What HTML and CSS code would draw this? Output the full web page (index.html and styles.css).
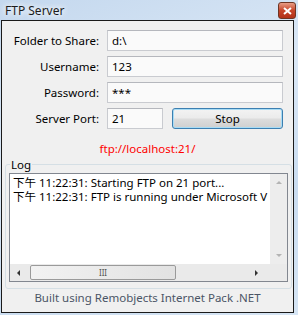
FILE: index.html
```html
<!DOCTYPE html>
<html>
  <head>
    <title>FTP Server</title>
    <link rel="stylesheet" href="styles.css">
  </head>
  <body>
    <div class="window">
      <div class="titlebar">
        <span class="title">FTP Server</span>
        <span class="close-button">
          <svg width="9" height="8" viewBox="0 0 9 8">
            <path d="M1 1 L8 7 M8 1 L1 7" stroke="#fff" stroke-width="2" />
          </svg>
        </span>
      </div>
      <div class="client">
        <div class="form">
          <label>Folder to Share:</label>
          <div class="textbox">d:\</div>
          <label>Username:</label>
          <div class="textbox">123</div>
          <label>Password:</label>
          <div class="textbox">***</div>
          <label>Server Port:</label>
          <div class="port-row">
            <div class="textbox port">21</div>
            <button class="stop-button">Stop</button>
          </div>
        </div>

        <div class="url">ftp://localhost:21/</div>

        <fieldset class="log-group">
          <legend>Log</legend>
          <div class="listbox">
            <div class="list-inner">
              <div class="lines">
                <div>下午 11:22:31: Starting FTP on 21 port...</div>
                <div>下午 11:22:31: FTP is running under Microsoft V</div>
              </div>
              <div class="vscroll">
                <span class="arrow up"></span>
                <span class="arrow down"></span>
              </div>
            </div>
            <div class="hscroll">
              <span class="arrow left"></span>
              <span class="thumb"><span class="grip">III</span></span>
              <span class="arrow right"></span>
              <span class="corner"></span>
            </div>
          </div>
        </fieldset>

        <div class="footer">Built using Remobjects Internet Pack .NET</div>
      </div>
    </div>
  </body>
</html>
```

FILE: styles.css
```css
body {
  margin: 0;
  width: 298px;
  height: 315px;
  overflow: hidden;
  background: linear-gradient(160deg, #c4d8ee 0%, #dbe8f6 40%, #c9dcf0 70%, #d6e5f4 100%);
  font-family: "Noto Sans", "Noto Sans CJK TC", sans-serif;
  font-size: 11.5px;
  color: #000;
}
.window {
  height: 315px;
  display: flex;
  flex-direction: column;
}
.titlebar {
  height: 20px;
  display: flex;
  align-items: center;
  justify-content: space-between;
  padding: 0 2px 0 5px;
}
.title {
  font-size: 12px;
  color: #1c1c1c;
  text-shadow: 0 0 6px #fff, 0 0 6px #fff;
}
.close-button {
  width: 16px;
  height: 15px;
  margin-top: 1px;
  border: 1px solid #6e3524;
  border-radius: 3px;
  background: linear-gradient(#e89d86, #c7452a 50%, #b23219);
  display: flex;
  align-items: center;
  justify-content: center;
}
.client {
  flex: 1;
  margin: 0 4px 2px 1px;
  border: 1px solid #1a1a1a;
  background: #f0f0f0;
  display: flex;
  flex-direction: column;
}
.form {
  display: grid;
  grid-template-columns: 97px 1fr;
  column-gap: 8px;
  row-gap: 5px;
  padding: 9px 10px 0 0;
  align-items: center;
}
.form label {
  text-align: right;
  color: #000;
}
.textbox {
  height: 21px;
  box-sizing: border-box;
  border: 1px solid #c9cbd0;
  border-top-color: #b5b7bd;
  background: #fafafa;
  padding: 2px 4px;
  line-height: 15px;
}
.port-row {
  display: flex;
  gap: 9px;
  align-items: center;
}
.textbox.port {
  width: 56px;
}
.stop-button {
  flex: 1;
  height: 21px;
  border: 1px solid #3c7fb1;
  border-radius: 3px;
  background: linear-gradient(#f3f3f3 0%, #ebebeb 48%, #dddddd 52%, #cfcfcf 100%);
  box-shadow: inset 0 0 0 1px #a8dcf5;
  font-family: "Noto Sans", sans-serif;
  font-size: 11.5px;
  color: #000;
  padding: 0;
}
.url {
  text-align: center;
  color: #ff0000;
  margin-top: 12px;
  height: 16px;
}
.log-group {
  margin: 0 7px 0 3px;
  padding: 0 3px 6px 3px;
  border: 1px solid #d5dfe5;
  border-radius: 3px;
}
.log-group legend {
  padding: 0 1px;
  margin-left: 1px;
}
.listbox {
  border: 1px solid #828790;
  background: #fff;
  height: 107px;
  display: flex;
  flex-direction: column;
  margin-top: 1px;
}
.list-inner {
  flex: 1;
  display: flex;
}
.lines {
  flex: 1;
  padding: 2px 3px;
  line-height: 14px;
  white-space: nowrap;
  overflow: hidden;
}
.vscroll {
  width: 17px;
  background: #ededed;
  display: flex;
  flex-direction: column;
  justify-content: space-between;
  align-items: center;
  padding: 7px 0;
}
.hscroll {
  height: 17px;
  background: #eaeaea;
  display: flex;
  align-items: center;
}
.arrow {
  width: 0;
  height: 0;
}
.arrow.up {
  border-left: 3px solid transparent;
  border-right: 3px solid transparent;
  border-bottom: 3px solid #b4b4b4;
}
.arrow.down {
  border-left: 3px solid transparent;
  border-right: 3px solid transparent;
  border-top: 3px solid #b4b4b4;
}
.arrow.left {
  margin: 0 10px 0 7px;
  border-top: 3px solid transparent;
  border-bottom: 3px solid transparent;
  border-right: 3px solid #333;
}
.arrow.right {
  margin: 0 10px 0 79px;
  border-top: 3px solid transparent;
  border-bottom: 3px solid transparent;
  border-left: 3px solid #333;
}
.thumb {
  width: 146px;
  height: 15px;
  box-sizing: border-box;
  border: 1px solid #9a9a9a;
  border-radius: 2px;
  background: linear-gradient(90deg, #f2f2f2, #e2e2e2);
  display: flex;
  align-items: center;
  justify-content: center;
}
.grip {
  font-size: 8px;
  color: #555;
  letter-spacing: 0;
}
.corner {
  flex: 1;
}
.footer {
  text-align: center;
  color: #4b5566;
  margin-top: 1px;
}
```
